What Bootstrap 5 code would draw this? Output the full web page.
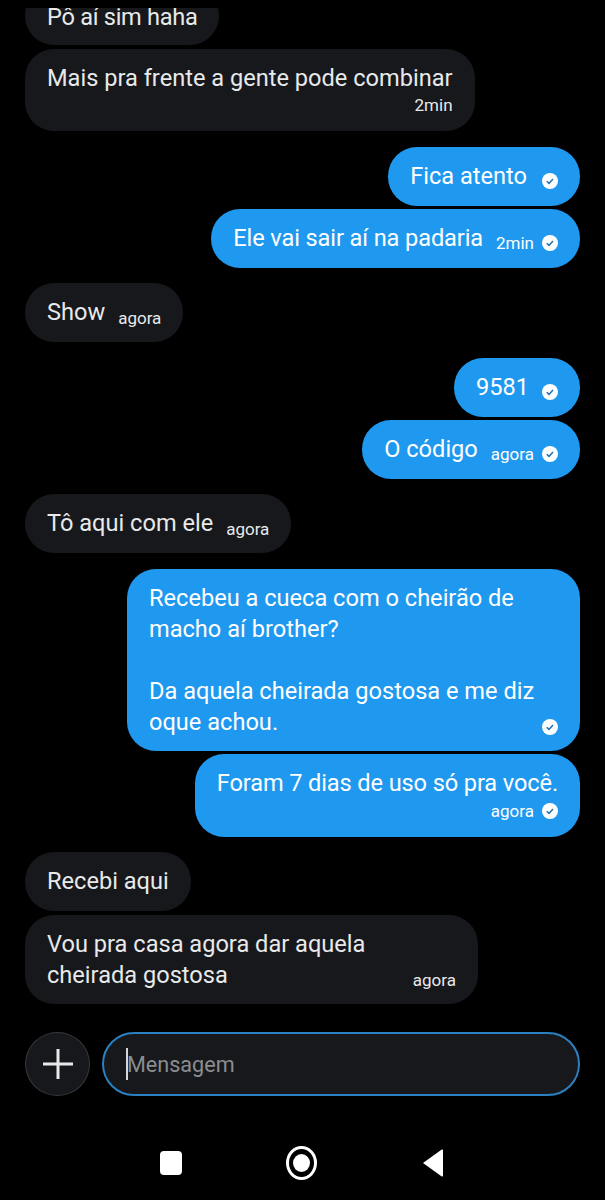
<!DOCTYPE html>
<html lang="pt-BR">
<head>
    <meta charset="UTF-8">
    <title>Mensagens</title>
    <link href="https://cdn.jsdelivr.net/npm/bootstrap@5.3.2/dist/css/bootstrap.min.css" rel="stylesheet">
    <style>
        html, body {
            height: 1200px;
            overflow: hidden;
            background: #000;
        }
        body {
            font-family: Roboto, "Liberation Sans", sans-serif;
            font-size: 23.6px;
            line-height: 31px;
            color: #e7e9ea;
        }
        .chat-scroll {
            height: 996px;
            margin-top: 8px;
            padding: 0 25px;
            overflow: hidden;
        }
        .chat-thread {
            margin-top: -22px;
            row-gap: 15.5px;
        }
        .msg-group-in { row-gap: 4px; }
        .msg-group-out { row-gap: 3px; }
        .bubble {
            border-radius: 29px;
            padding: 14px 22px;
        }
        .bubble-first { padding: 16px 22px 12px; }
        .bubble-in { background: #17181c; }
        .bubble-out { background: #1f98ef; color: #fff; }
        .bubble-wide { width: 453px; padding-bottom: 13px; }
        .bubble-in-wide { width: 453px; padding-bottom: 13px; }
        .txt-tight { letter-spacing: -.3px; }
        .txt-tight-sm { letter-spacing: -.12px; }
        .meta {
            font-size: 17px;
            line-height: 23px;
            white-space: nowrap;
        }
        .meta-tall { line-height: 24px; letter-spacing: 0; }
        .meta-inline {
            margin-left: 13px;
            padding-top: 10px;
            line-height: 20px;
            letter-spacing: 0;
        }
        .meta-gap { margin-left: 15px; }
        .tick {
            width: 16px;
            height: 16px;
            flex-shrink: 0;
        }
        .composer {
            height: 64px;
            margin-top: 28px;
            padding: 0 25px;
            gap: 12px;
        }
        .plus-btn {
            width: 65px;
            height: 64px;
            border: 1.5px solid #37383b;
            background: #17181c;
            flex-shrink: 0;
        }
        .msg-box {
            border: 2px solid #2b80c2;
            border-radius: 32px;
            background: #17181c;
            padding-left: 22px;
            color: #8b8d90;
            font-size: 21.6px;
        }
        .caret-bar {
            width: 2px;
            height: 32px;
            margin-right: -1px;
            background: #d5d6d8;
        }
        .nav-bar-sys {
            margin-top: 50px;
            padding-right: 2px;
        }
        .nav-cell { width: 131px; }
    </style>
</head>
<body>

<div class="chat-scroll">
    <div class="chat-thread d-flex flex-column">

        <div class="msg-group-in d-flex flex-column align-items-start">
            <div class="bubble bubble-first bubble-in txt-tight">Pô aí sim haha</div>
            <div class="bubble bubble-in">
                <div>Mais pra frente a gente pode combinar</div>
                <div class="meta text-end">2min</div>
            </div>
        </div>

        <div class="msg-group-out d-flex flex-column align-items-end">
            <div class="bubble bubble-out d-flex align-items-center">
                <span>Fica atento</span>
                <span class="meta meta-inline meta-gap d-flex align-items-center">
                    <svg class="tick" viewBox="0 0 16 16"><circle cx="8" cy="8" r="8" fill="#fff"/><path d="M4.8 8.2l2.2 2.2 4-4.4" fill="none" stroke="#1f6fb0" stroke-width="1.5"/></svg>
                </span>
            </div>
            <div class="bubble bubble-out d-flex align-items-center">
                <span class="txt-tight-sm">Ele vai sair aí na padaria</span>
                <span class="meta meta-inline d-flex align-items-center gap-2">2min
                    <svg class="tick" viewBox="0 0 16 16"><circle cx="8" cy="8" r="8" fill="#fff"/><path d="M4.8 8.2l2.2 2.2 4-4.4" fill="none" stroke="#1f6fb0" stroke-width="1.5"/></svg>
                </span>
            </div>
        </div>

        <div class="msg-group-in d-flex flex-column align-items-start">
            <div class="bubble bubble-in d-flex align-items-center">
                <span>Show</span>
                <span class="meta meta-inline">agora</span>
            </div>
        </div>

        <div class="msg-group-out d-flex flex-column align-items-end">
            <div class="bubble bubble-out d-flex align-items-center">
                <span>9581</span>
                <span class="meta meta-inline d-flex align-items-center">
                    <svg class="tick" viewBox="0 0 16 16"><circle cx="8" cy="8" r="8" fill="#fff"/><path d="M4.8 8.2l2.2 2.2 4-4.4" fill="none" stroke="#1f6fb0" stroke-width="1.5"/></svg>
                </span>
            </div>
            <div class="bubble bubble-out d-flex align-items-center">
                <span>O código</span>
                <span class="meta meta-inline d-flex align-items-center gap-2">agora
                    <svg class="tick" viewBox="0 0 16 16"><circle cx="8" cy="8" r="8" fill="#fff"/><path d="M4.8 8.2l2.2 2.2 4-4.4" fill="none" stroke="#1f6fb0" stroke-width="1.5"/></svg>
                </span>
            </div>
        </div>

        <div class="msg-group-in d-flex flex-column align-items-start">
            <div class="bubble bubble-in d-flex align-items-center">
                <span>Tô aqui com ele</span>
                <span class="meta meta-inline">agora</span>
            </div>
        </div>

        <div class="msg-group-out d-flex flex-column align-items-end">
            <div class="bubble bubble-out bubble-wide">
                <div>Recebeu a cueca com o cheirão de<br>macho aí brother?<br>&nbsp;<br>Da aquela cheirada gostosa e me diz</div>
                <div class="d-flex justify-content-between">
                    <span>oque achou.</span>
                    <span class="meta meta-inline d-flex align-items-center">
                        <svg class="tick" viewBox="0 0 16 16"><circle cx="8" cy="8" r="8" fill="#fff"/><path d="M4.8 8.2l2.2 2.2 4-4.4" fill="none" stroke="#1f6fb0" stroke-width="1.5"/></svg>
                    </span>
                </div>
            </div>
            <div class="bubble bubble-out">
                <div class="txt-tight-sm">Foram 7 dias de uso só pra você.</div>
                <div class="meta meta-tall d-flex align-items-center justify-content-end gap-2">agora
                    <svg class="tick" viewBox="0 0 16 16"><circle cx="8" cy="8" r="8" fill="#fff"/><path d="M4.8 8.2l2.2 2.2 4-4.4" fill="none" stroke="#1f6fb0" stroke-width="1.5"/></svg>
                </div>
            </div>
        </div>

        <div class="msg-group-in d-flex flex-column align-items-start">
            <div class="bubble bubble-in">Recebi aqui</div>
            <div class="bubble bubble-in bubble-in-wide">
                <div>Vou pra casa agora dar aquela</div>
                <div class="d-flex justify-content-between">
                    <span>cheirada gostosa</span>
                    <span class="meta meta-inline">agora</span>
                </div>
            </div>
        </div>

    </div>
</div>

<div class="composer d-flex">
    <div class="plus-btn rounded-circle d-flex align-items-center justify-content-center">
        <svg width="30" height="30" viewBox="0 0 30 30"><path d="M15 0v30M0 15h30" stroke="#e7e9ea" stroke-width="3"/></svg>
    </div>
    <div class="msg-box flex-grow-1 d-flex align-items-center">
        <span class="caret-bar"></span><span>Mensagem</span>
    </div>
</div>

<div class="nav-bar-sys d-flex justify-content-center align-items-center">
    <div class="nav-cell d-flex justify-content-center">
        <svg width="22" height="24" viewBox="0 0 22 24"><rect width="22" height="24" rx="4" fill="#fff"/></svg>
    </div>
    <div class="nav-cell d-flex justify-content-center">
        <svg width="31" height="34" viewBox="0 0 31 34"><ellipse cx="15.500" cy="17" rx="14" ry="15.500" fill="none" stroke="#fff" stroke-width="3"/><ellipse cx="15.500" cy="17" rx="8.500" ry="9" fill="#fff"/></svg>
    </div>
    <div class="nav-cell d-flex justify-content-center">
        <svg width="22" height="28" viewBox="0 0 22 28"><path d="M21 1.500v25a1 1 0 0 1-1.600.8L1 14 19.400.7A1 1 0 0 1 21 1.500z" fill="#fff"/></svg>
    </div>
</div>

</body>
</html>
